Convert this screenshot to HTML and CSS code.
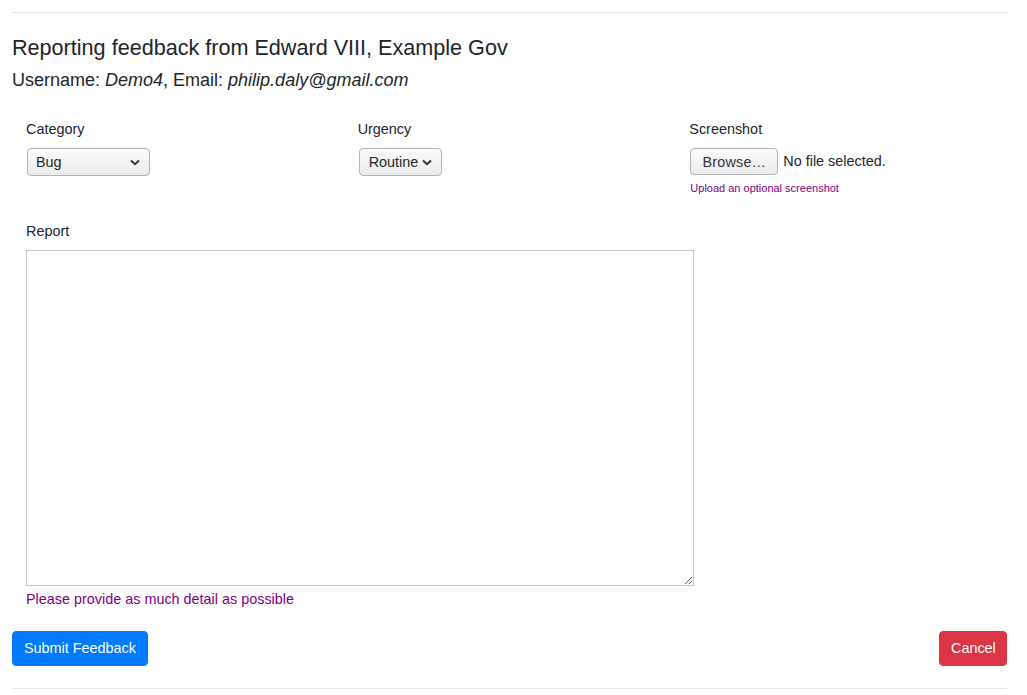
FILE: index.html
```html
<!DOCTYPE html>
<html lang="en">
<head>
<meta charset="utf-8">
<title>Feedback</title>
<link rel="stylesheet" href="styles.css">
</head>
<body>
<div class="page">
  <hr class="rule rule-top">
  <h5 class="title">Reporting feedback from Edward VIII, Example Gov</h5>
  <p class="user">Username: <em>Demo4</em>, Email: <em>philip.daly@gmail.com</em></p>
  <form class="form">
    <div class="row">
      <div class="field">
        <label class="label" for="cat">Category</label>
        <select id="cat" class="select select-cat"><option>Bug</option></select>
      </div>
      <div class="field">
        <label class="label" for="urg">Urgency</label>
        <select id="urg" class="select select-urg"><option>Routine</option></select>
      </div>
      <div class="field">
        <label class="label">Screenshot</label>
        <div class="file">
          <button type="button" class="browse">Browse…</button>
          <span class="file-name">No file selected.</span>
        </div>
        <small class="hint">Upload an optional screenshot</small>
      </div>
    </div>
    <div class="report">
      <label class="label report-label" for="rep">Report</label>
      <textarea id="rep" class="textarea"></textarea>
      <div class="help">Please provide as much detail as possible</div>
    </div>
    <div class="actions">
      <button type="button" class="btn btn-primary">Submit Feedback</button>
      <button type="button" class="btn btn-danger">Cancel</button>
    </div>
  </form>
  <hr class="rule rule-bottom">
</div>
</body>
</html>
```
FILE: styles.css
```css
* { box-sizing: border-box; }
html, body { margin: 0; padding: 0; background: #fff; }
body {
  font-family: "Liberation Sans", Arial, sans-serif;
  color: #212529;
  font-size: 14.4px;
  line-height: 21px;
}
.page { padding: 0 20px 0 12px; }
.rule { border: 0; border-top: 1px solid #e3e3e3; margin: 0; }
.rule-top { margin-top: 12px; }
.rule-bottom { margin-top: 22px; }
.title {
  font-size: 21.6px;
  font-weight: 400;
  line-height: 24px;
  margin: 23px 0 0;
}
.user {
  font-size: 18px;
  line-height: 24px;
  margin: 8px 0 0;
}
.form { margin-top: 27px; }
.row {
  display: grid;
  grid-template-columns: 1fr 1fr 1fr;
  column-gap: 28px;
  padding: 0 14px;
}
.field { display: flex; flex-direction: column; align-items: flex-start; }
.label { display: block; margin-bottom: 8px; }
.select {
  -webkit-appearance: none;
  appearance: none;
  font-family: inherit;
  font-size: 14.4px;
  color: #212529;
  height: 28px;
  border: 1px solid #b3b3b3;
  border-radius: 4px;
  padding: 0 22px 0 8px;
  background-color: #f2f2f2;
  background-image: url("data:image/svg+xml;utf8,<svg xmlns='http://www.w3.org/2000/svg' width='10' height='7' viewBox='0 0 10 7'><path d='M1 1.5 L5 5.2 L9 1.5' fill='none' stroke='%23333' stroke-width='2'/></svg>"), linear-gradient(#fbfbfb, #ebebeb);
  background-repeat: no-repeat, no-repeat;
  background-position: right 9px center, 0 0;
  background-size: 10px 7px, 100% 100%;
}
.select-cat { width: 123px; margin-left: 1px; }
.select-urg { width: 83px; margin-left: 1px; padding-left: 9px; }
.file { display: flex; align-items: center; gap: 5px; margin-left: 1px; }
.browse {
  font-family: inherit;
  font-size: 14.4px;
  color: #333;
  height: 27px;
  width: 88px;
  padding: 0;
  border: 1px solid #b3b3b3;
  border-radius: 4px;
  background: linear-gradient(#fbfbfb, #ebebeb);
  letter-spacing: 0.2px;
}
.file-name { font-size: 14.4px; }
.hint {
  display: block;
  color: #800080;
  font-size: 11px;
  line-height: 16px;
  margin-top: 5px;
  margin-left: 1px;
}
.report { padding: 0 14px; margin-top: 25px; }
.textarea {
  display: block;
  width: 668px;
  height: 336px;
  border: 1px solid #c6c6c6;
  margin: 0;
  padding: 4px;
  font-family: inherit;
  font-size: 14px;
  background: #fff;
}
.report .report-label { margin-bottom: 8px; }
.help { color: #800080; margin-top: 3px; }
.actions {
  display: flex;
  justify-content: space-between;
  margin-top: 21px;
}
.btn {
  font-family: inherit;
  font-size: 14.4px;
  line-height: 21px;
  height: 35px;
  padding: 0 11px;
  border: 1px solid transparent;
  border-radius: 4px;
  color: #fff;
}
.btn-primary { background: #007bff; border-color: #007bff; width: 136px; }
.btn-danger { background: #dc3545; border-color: #dc3545; width: 68px; }
```
